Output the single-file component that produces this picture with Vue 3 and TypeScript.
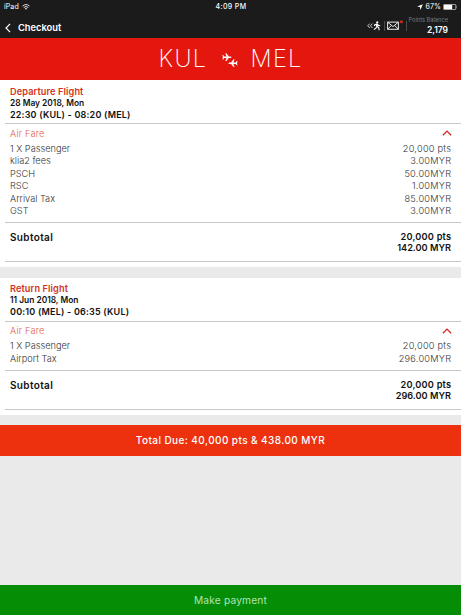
<script setup lang="ts">
interface Fare {
  label: string
  amount: string
}
interface Flight {
  title: string
  date: string
  route: string
  fares: Fare[]
  points: string
  cash: string
}

const flights: Flight[] = [
  {
    title: 'Departure Flight',
    date: '28 May 2018, Mon',
    route: '22:30 (KUL) - 08:20 (MEL)',
    fares: [
      { label: '1 X Passenger', amount: '20,000 pts' },
      { label: 'klia2 fees', amount: '3.00MYR' },
      { label: 'PSCH', amount: '50.00MYR' },
      { label: 'RSC', amount: '1.00MYR' },
      { label: 'Arrival Tax', amount: '85.00MYR' },
      { label: 'GST', amount: '3.00MYR' },
    ],
    points: '20,000 pts',
    cash: '142.00 MYR',
  },
  {
    title: 'Return Flight',
    date: '11 Jun 2018, Mon',
    route: '00:10 (MEL) - 06:35 (KUL)',
    fares: [
      { label: '1 X Passenger', amount: '20,000 pts' },
      { label: 'Airport Tax', amount: '296.00MYR' },
    ],
    points: '20,000 pts',
    cash: '296.00 MYR',
  },
]
</script>

<template>
  <div class="screen">
    <header class="top">
      <div class="status">
        <div class="device">
          <span>iPad</span>
          <svg class="wifi" viewBox="0 0 8 6" fill="none" stroke="#eee" stroke-width="0.9">
            <path d="M0.5 2.1Q4-1 7.5 2.1M1.7 3.5Q4 1.5 6.3 3.5" />
            <path d="M2.8 4.6Q4 3.6 5.2 4.6L4 5.8Z" fill="#eee" stroke="none" />
          </svg>
        </div>
        <span class="clock">4:09 PM</span>
        <div class="power">
          <svg class="locate" viewBox="0 0 6 6"><path d="M5.8.2L3.4 5.9 2.9 3.1.1 2.600Z" fill="#fff" /></svg>
          <span>67%</span>
          <svg class="battery" viewBox="0 0 15 6">
            <rect x=".4" y=".4" width="12.4" height="5.2" rx=".8" fill="none" stroke="#ddd" stroke-width=".7" />
            <rect x="1" y="0.800" width="8.200" height="4.400" fill="#fff" />
            <path d="M13.5 2v2q1.200-1 0-2Z" fill="#ddd" />
          </svg>
        </div>
      </div>
      <nav class="nav">
        <svg class="back" viewBox="0 0 6 10"><path d="M5.1.8L1 5l4.1 4.2" fill="none" stroke="#fff" stroke-width="1.2" /></svg>
        <h1>Checkout</h1>
        <svg class="runner" viewBox="0 0 14 10" fill="none" stroke="#fff" stroke-width=".9">
          <path d="M2.8 2.6L.7 4.8l2.1 2.2M5.5 2.6L3.4 4.8 5.5 7" stroke="#ddd" />
          <circle cx="10.3" cy="1.4" r="1.1" fill="#fff" stroke="none" />
          <path d="M10 2.7L9.8 5.6" stroke-width="2" />
          <path d="M10 3.1L7.8 3.6 7.3 5M10.3 3.2l1.3 1.5 1.6-.2M9.7 5.4L9 7.2 6.9 8.4M10 5.5l1.8 1.3.3 2.5" stroke-width="1.1" />
        </svg>
        <i class="rule"></i>
        <svg class="mail" viewBox="0 0 16 11">
          <path d="M.6 2.1h10.8v7.2H.6ZM.6 2.1L6 6.6l5.4-4.5M.6 9.3l3.9-4M11.4 9.3l-3.9-4" fill="none" stroke="#fff" stroke-width=".9" />
          <circle cx="14.4" cy="1.8" r="1.5" fill="#d92318" />
        </svg>
        <i class="rule last"></i>
        <div class="balance">
          <small>Points Balance</small>
          <b>2,179</b>
        </div>
      </nav>
    </header>

    <section class="route">
      <span class="origin">KUL</span>
      <svg class="planes" viewBox="0 0 16 14" fill="#fff">
        <path d="M.4 2h.8l1 1.5h2.3L3.4.3h1l2.4 3.2h1.7q.8.1 1 .7-.2.6-1 .7H6.800L4.400 8.100h-1l1.100-3.200H2.200l-1 1.500H.4L.9 4.200Z" />
        <path d="M15.500 8h-.8l-1 1.500h-2.300l1.100-3.200h-1L9.100 9.500H7.400q-.8.1-1 .7.2.6 1 .7h1.700l2.400 3.100h1l-1.100-3.100h2.300l1 1.400h.8L15 10.200Z" />
      </svg>
      <span class="destination">MEL</span>
    </section>

    <main>
      <article v-for="flight in flights" :key="flight.title" class="card">
        <div class="heading">
          <h2>{{ flight.title }}</h2>
          <p class="date">{{ flight.date }}</p>
          <p class="times">{{ flight.route }}</p>
        </div>
        <div class="fare-title">
          <span>Air Fare</span>
          <svg viewBox="0 0 10 6"><path d="M.9 5.2L5 1.100l4.100 4.100" fill="none" stroke="#d3281e" stroke-width="1.300" /></svg>
        </div>
        <ul>
          <li v-for="fare in flight.fares" :key="fare.label">
            <span>{{ fare.label }}</span>
            <span class="amount">{{ fare.amount }}</span>
          </li>
        </ul>
        <div class="subtotal">
          <strong>Subtotal</strong>
          <div class="sum">
            <span class="points">{{ flight.points }}</span>
            <span>{{ flight.cash }}</span>
          </div>
        </div>
      </article>
    </main>

    <div class="total"><span>Total Due: 40,000 pts &amp; 438.00 MYR</span></div>
    <button class="pay" type="button">Make payment</button>
  </div>
</template>

<style>
body {
  margin: 0;
}
</style>

<style scoped>
.screen {
  display: flex;
  flex-direction: column;
  width: 461px;
  height: 615px;
  overflow: hidden;
  background: #eaeaea;
  font-family: Inter, "Liberation Sans", sans-serif;
  white-space: nowrap;
}
h1, h2, p, ul {
  margin: 0;
  padding: 0;
  font-weight: 600;
}
svg {
  display: block;
  flex: none;
}
.top {
  height: 38px;
  background: #1b1b1b;
  color: #fff;
}
.status {
  display: grid;
  grid-template-columns: 1fr auto 1fr;
  align-items: center;
  height: 13px;
  padding: 0 3px 0 4px;
  font-size: 7px;
  line-height: 13px;
  letter-spacing: 0.1px;
}
.device, .power {
  display: flex;
  align-items: center;
  gap: 3px;
}
.power {
  justify-content: flex-end;
  gap: 2px;
}
.power .locate {
  margin-right: 1px;
}
.clock {
  font-weight: 500;
  letter-spacing: 0.35px;
}
.wifi {
  width: 8px;
  height: 6px;
}
.locate {
  width: 6px;
  height: 6px;
}
.battery {
  width: 15px;
  height: 6px;
}
.nav {
  display: flex;
  align-items: center;
  height: 25px;
  padding: 0 13px 0 5px;
}
.back {
  width: 6px;
  height: 10px;
  margin-top: 4px;
}
h1 {
  flex: 1;
  margin: 4px 0 0 7px;
  font-size: 9.3px;
  line-height: 12px;
}
.runner {
  width: 14px;
  height: 10px;
  margin-top: 1px;
}
.rule {
  width: 1px;
  height: 10px;
  margin: 0 2px 0 3px;
  background: #4b4b4b;
}
.rule.last {
  margin: 0 0 0 3px;
}
.mail {
  width: 16px;
  height: 11px;
}
.balance {
  display: flex;
  flex-direction: column;
  align-items: flex-end;
  width: 41px;
  margin-top: -2px;
}
.balance small {
  color: #777;
  font-size: 5.7px;
  line-height: 10px;
}
.balance b {
  font-size: 8.5px;
  font-weight: 600;
  line-height: 10px;
}
.route {
  display: flex;
  align-items: center;
  box-sizing: border-box;
  height: 42px;
  padding-left: 158.500px;
  background: #e4170e;
  color: #fff;
  font-size: 23.500px;
  font-weight: 200;
  line-height: 42px;
  letter-spacing: 1.3px;
}
.origin {
  width: 63px;
}
.planes {
  width: 16px;
  height: 14px;
  margin-top: 1px;
}
.destination {
  margin-left: 13px;
}
main {
  display: grid;
  gap: 11px;
}
.card {
  padding: 0 0 5px 5px;
  background: #fff;
}
.heading {
  box-sizing: border-box;
  height: 44px;
  padding: 4.500px 0 0 5px;
  border-bottom: 1px solid #c8c8c8;
  color: #111;
}
h2 {
  color: #d53220;
  font-size: 9.2px;
  line-height: 13px;
  letter-spacing: 0.1px;
}
.date {
  font-size: 8.4px;
  line-height: 11px;
}
.times {
  font-size: 9px;
  line-height: 11px;
  letter-spacing: 0.2px;
}
.fare-title {
  display: flex;
  align-items: center;
  justify-content: space-between;
  height: 18px;
  padding: 0 9px 0 5px;
  color: #df5a49;
  font-size: 9.2px;
  font-weight: 300;
  letter-spacing: 0.2px;
}
.fare-title svg {
  width: 10px;
  height: 6px;
}
ul {
  padding: 0.500px 10px 3.900px 5px;
  border-bottom: 1px solid #c8c8c8;
  list-style: none;
}
li {
  display: flex;
  justify-content: space-between;
  height: 12.6px;
  color: #333;
  font-size: 9.2px;
  font-weight: 300;
  line-height: 12.6px;
}
.amount {
  margin-right: -0.25px;
  letter-spacing: 0.25px;
}
.subtotal {
  display: flex;
  justify-content: space-between;
  box-sizing: border-box;
  height: 39px;
  padding: 8px 10px 0 5px;
  border-bottom: 1px solid #c8c8c8;
  color: #111;
}
.subtotal strong {
  font-size: 10px;
  font-weight: 600;
  line-height: 12px;
  letter-spacing: 0.35px;
}
.sum {
  display: flex;
  flex-direction: column;
  align-items: flex-end;
  font-size: 9.2px;
  font-weight: 600;
  line-height: 11px;
}
.points {
  margin-right: -0.2px;
  letter-spacing: 0.2px;
}
.total {
  height: 31px;
  margin-top: 10.4px;
  background: #ed310f;
  color: #fff;
  font-size: 10px;
  font-weight: 500;
  line-height: 31px;
  letter-spacing: 0.42px;
  text-align: center;
}
.pay {
  height: 30px;
  margin-top: auto;
  padding: 0;
  border: 0;
  background: #058e05;
  color: #b4e3b4;
  font: 400 10.2px/30px Inter, "Liberation Sans", sans-serif;
  letter-spacing: 0.18px;
}
</style>
